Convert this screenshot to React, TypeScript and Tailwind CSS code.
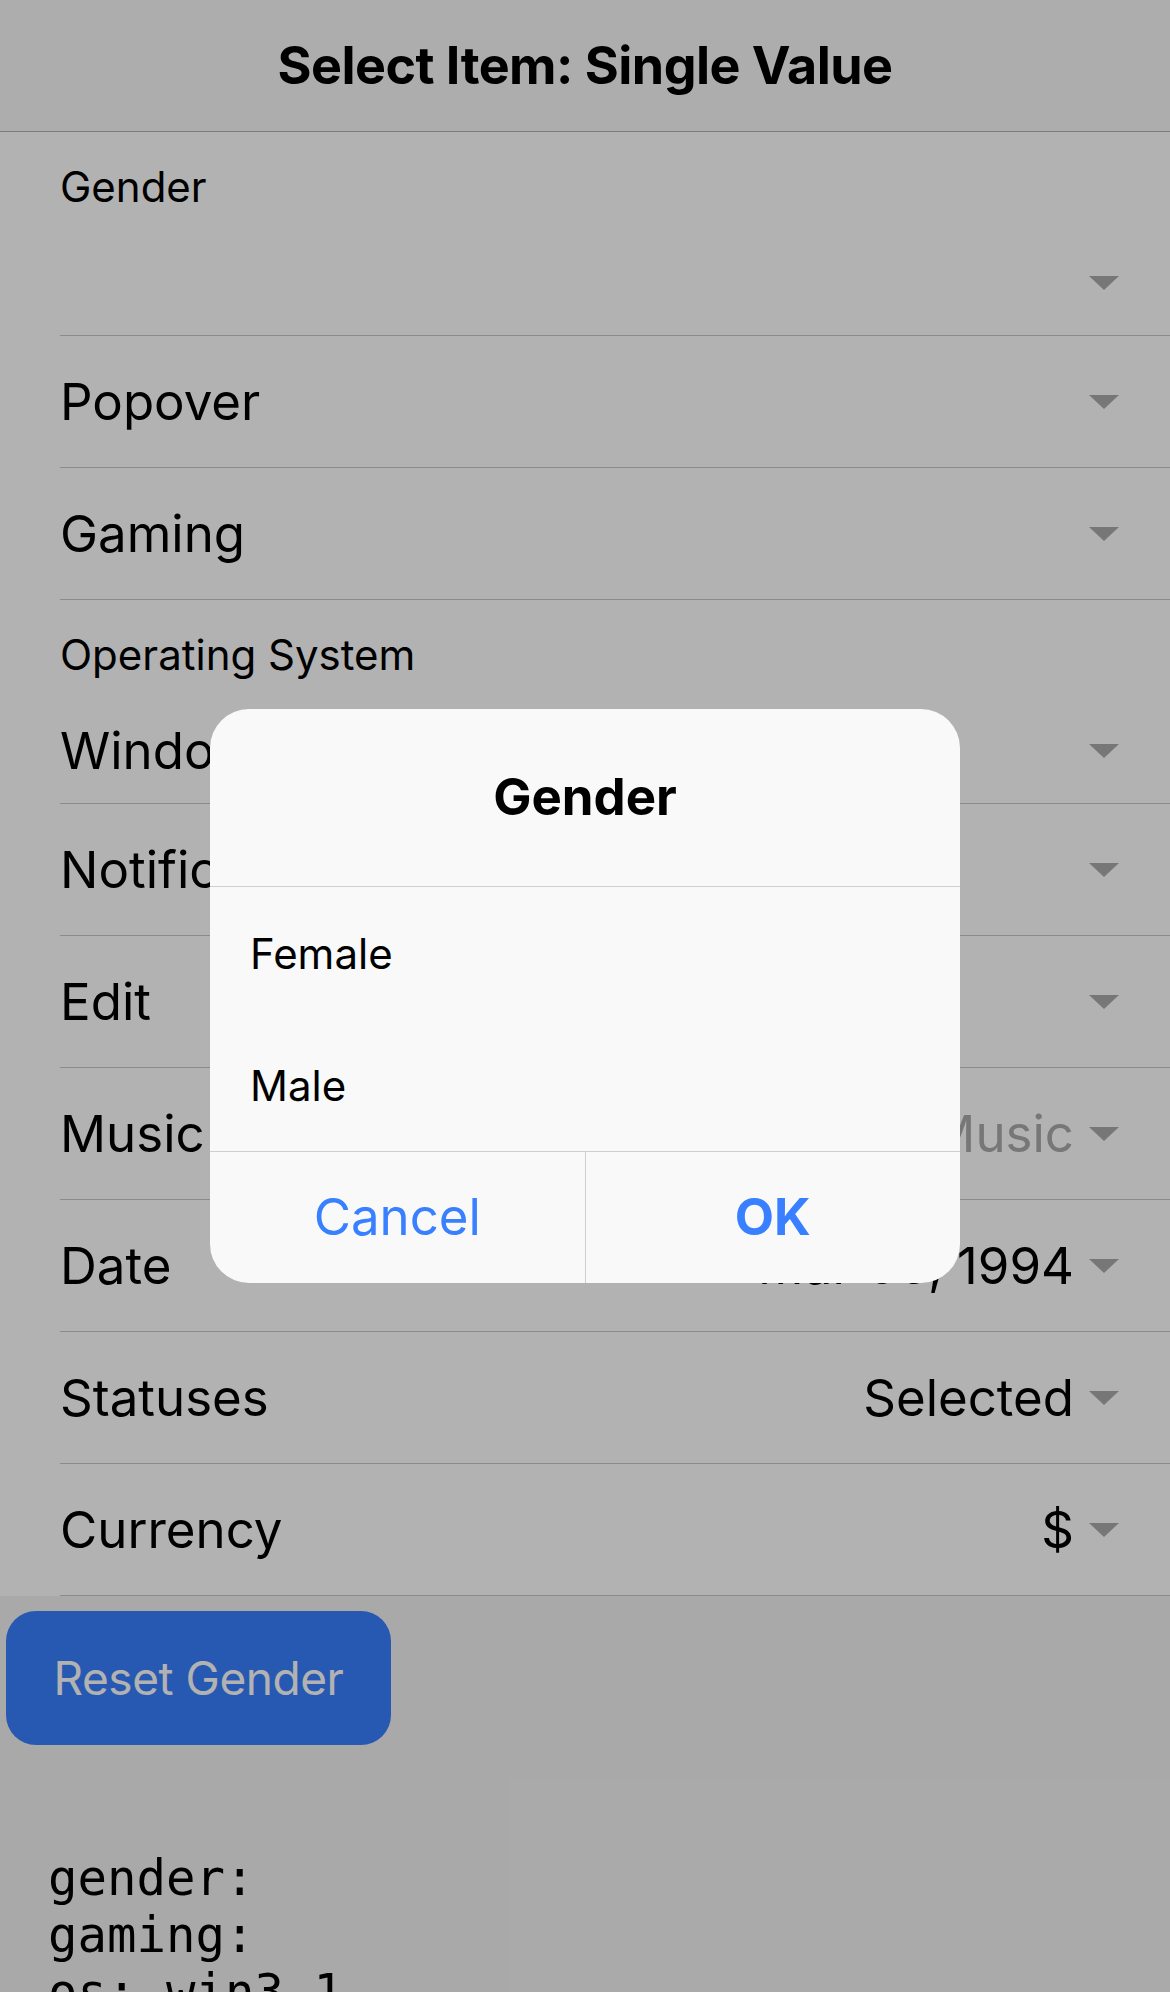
import React from 'react';

const sans = "font-['Inter','Noto_Sans',sans-serif]";

/** Small down-pointing caret used by every select row */
function Caret() {
    return (
        <svg width="30" height="14" viewBox="0 0 30 14" className="shrink-0">
            <polygon points="0,0 30,0 15,14" fill="#ababab" />
        </svg>
    );
}

interface RowProps {
    label: string;
    value?: string;
    placeholder?: boolean;
}

function SelectRow({ label, value, placeholder }: RowProps) {
    return (
        <div className="pl-[60px]">
            <div className="flex h-[132px] items-center border-b border-[#c8c7cc] pr-[51px]">
                <span className="flex-1 text-[51px] leading-[60px] text-black">{label}</span>
                {value && (
                    <span className={`mr-[15px] text-[51px] leading-[60px] ${placeholder ? 'text-[#ababab]' : 'text-black'}`}>
                        {value}
                    </span>
                )}
                <Caret />
            </div>
        </div>
    );
}

function StackedRow({ label, value }: { label: string; value?: string }) {
    return (
        <div className="pl-[60px]">
            <div className="flex h-[204px] flex-col border-b border-[#c8c7cc] pr-[51px]">
                <div className="mt-[30px] h-[50px] text-[42px] leading-[50px] text-black">{label}</div>
                <div className="mt-[31px] flex h-[80px] items-center">
                    <span className="flex-1 text-[51px] leading-[60px] text-black">{value}</span>
                    <Caret />
                </div>
            </div>
        </div>
    );
}

export default function App() {
    return (
        <div className={`relative h-[1992px] w-[1170px] overflow-hidden bg-[#f3f3f3] ${sans}`}>
            {/* Toolbar */}
            <header className="flex h-[132px] items-center justify-center border-b border-[#b2b2b2] bg-[#f8f8f8]">
                <h1 className="text-[52px] font-bold tracking-[-0.01em] text-black">Select Item: Single Value</h1>
            </header>

            {/* Select list */}
            <div className="bg-white">
                <StackedRow label="Gender" />
                <SelectRow label="Popover" />
                <SelectRow label="Gaming" />
                <StackedRow label="Operating System" value="Windows 3.1" />
                <SelectRow label="Notifications" />
                <SelectRow label="Edit" />
                <SelectRow label="Music" value="Select Music" placeholder />
                <SelectRow label="Date" value="Mar 06, 1994" />
                <SelectRow label="Statuses" value="Selected" />
                <SelectRow label="Currency" value="$" />
            </div>

            <button className="ml-[6px] mt-[15px] flex h-[134px] w-[385px] items-center justify-center rounded-[30px] bg-[#3880ff] text-[46px] tracking-[-0.01em] text-white">
                Reset Gender
            </button>

            <pre className="mt-[105px] pl-[48px] font-['DejaVu_Sans_Mono','Liberation_Mono',monospace] text-[49px] leading-[57px] text-black">
{`gender:
gaming:
os: win3.1
notifications:
music:
date: 1994-03-06
statuses: selected
currency: $`}
            </pre>

            {/* Backdrop */}
            <div className="absolute inset-0 bg-black/30" />

            {/* Alert dialog */}
            <div className="absolute left-[210px] top-[709px] flex h-[574px] w-[750px] flex-col overflow-hidden rounded-[39px] bg-[#f9f9f9]">
                <div className="flex h-[178px] items-center justify-center border-b border-[#cfcfcf]">
                    <span className="text-[51px] font-bold text-black">Gender</span>
                </div>
                <div className="flex h-[132px] items-center pl-[40px] text-[42px] text-black">Female</div>
                <div className="flex h-[132px] items-center pl-[40px] text-[42px] text-black">Male</div>
                <div className="flex flex-1 border-t border-[#cfcfcf]">
                    <button className="flex-1 border-r border-[#cfcfcf] text-[51px] text-[#3880ff]">Cancel</button>
                    <button className="flex-1 text-[51px] font-bold text-[#3880ff]">OK</button>
                </div>
            </div>
        </div>
    );
}
